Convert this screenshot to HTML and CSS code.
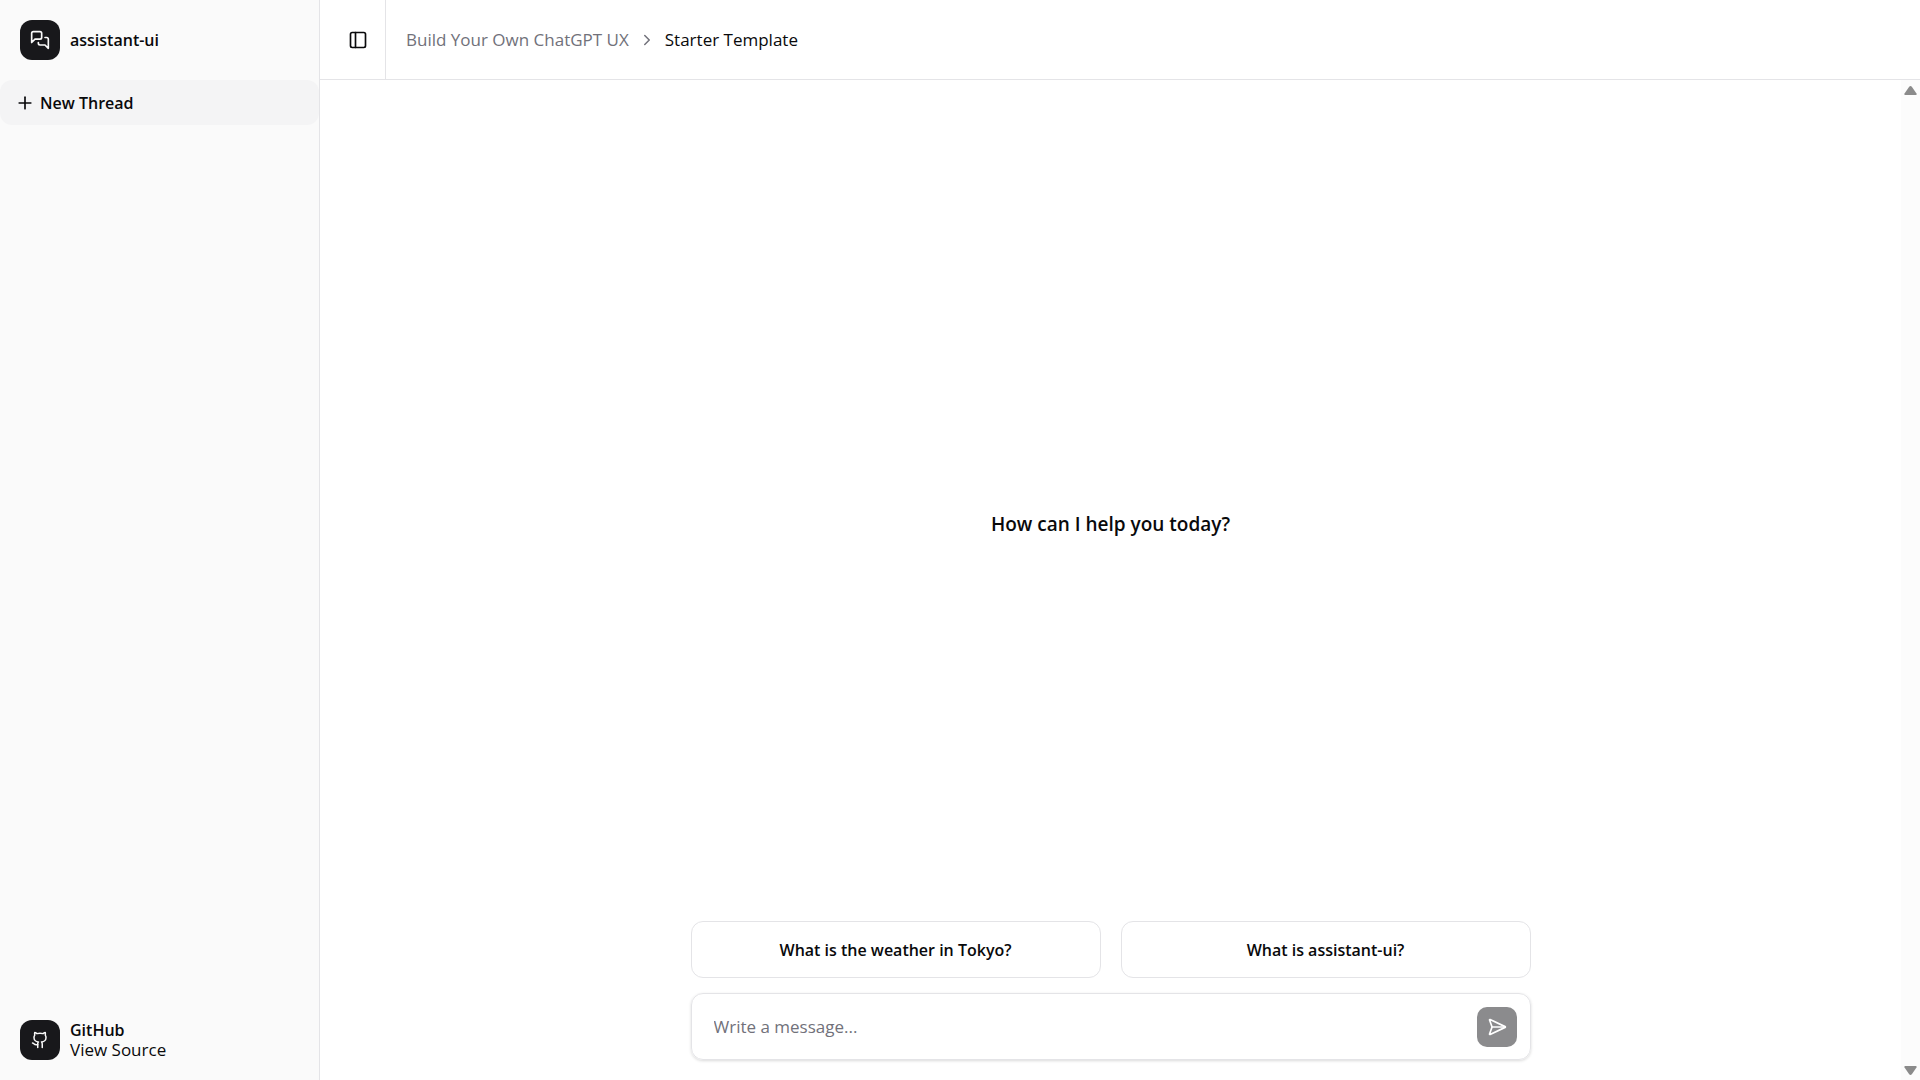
FILE: index.html
```html
<!DOCTYPE html>
<html lang="en">
<head>
<meta charset="utf-8">
<title>assistant-ui</title>
<link rel="stylesheet" href="styles.css">
</head>
<body>
<div class="app">
  <aside class="sidebar">
    <a class="brand" href="#">
      <span class="brand-icon"><svg class="icon" viewBox="0 0 24 24"><path d="M14 9a2 2 0 0 1-2 2H6l-4 4V4a2 2 0 0 1 2-2h8a2 2 0 0 1 2 2z"/><path d="M18 9h2a2 2 0 0 1 2 2v11l-4-4h-6a2 2 0 0 1-2-2v-1"/></svg></span>
      <span class="brand-text"><span class="brand-name">assistant-ui</span></span>
    </a>
    <button class="new-thread" type="button"><svg class="icon" viewBox="0 0 24 24"><path d="M5 12h14"/><path d="M12 5v14"/></svg>New Thread</button>
    <a class="brand brand-footer" href="#">
      <span class="brand-icon"><svg class="icon icon-small" viewBox="0 0 24 24"><path d="M15 22v-4a4.800 4.800 0 0 0-1-3.500c3 0 6-2 6-5.500.08-1.250-.27-2.480-1-3.500.28-1.150.28-2.350 0-3.500 0 0-1 0-3 1.500-2.640-.5-5.360-.5-8 0C6 2 5 2 5 2c-.3 1.150-.3 2.350 0 3.500A5.403 5.403 0 0 0 4 9c0 3.500 3 5.500 6 5.500-.39.490-.68 1.050-.85 1.650-.17.600-.22 1.230-.15 1.850v4"/><path d="M9 18c-4.510 2-5-2-7-2"/></svg></span>
      <span class="brand-text"><span class="brand-name">GitHub</span><span>View Source</span></span>
    </a>
  </aside>
  <main class="main">
    <header class="header">
      <div class="header-toggle">
        <button class="toggle" type="button" aria-label="Toggle sidebar"><svg class="icon" viewBox="0 0 24 24"><rect width="18" height="18" x="3" y="3" rx="2"/><path d="M9 3v18"/></svg></button>
      </div>
      <nav class="breadcrumb" aria-label="Breadcrumb">
        <a href="#">Build Your Own ChatGPT UX</a>
        <svg class="icon icon-small" viewBox="0 0 24 24"><path d="m9 18 6-6-6-6"/></svg>
        <span class="current">Starter Template</span>
      </nav>
    </header>
    <div class="body">
      <section class="thread">
        <div class="welcome"><p>How can I help you today?</p></div>
        <div class="suggestions">
          <button type="button">What is the weather in Tokyo?</button>
          <button type="button">What is assistant-ui?</button>
        </div>
        <form class="composer">
          <input type="text" placeholder="Write a message..." aria-label="Message">
          <button class="send" type="button" aria-label="Send"><svg class="icon" viewBox="0 0 24 24"><path d="M3.714 3.048a.498.498 0 0 0-.683.627l2.843 7.627a2 2 0 0 1 0 1.396l-2.842 7.627a.498.498 0 0 0 .682.627l18-8.500a.5.5 0 0 0 0-.904z"/><path d="M6 12h16"/></svg></button>
        </form>
      </section>
      <div class="scrollbar" aria-hidden="true">
        <svg viewBox="0 0 13 10"><path d="M6.500 0Q7.200 0 8 1L12.500 7.500Q13 9 12 9H1Q0 9 .5 7.500L5 1Q5.800 0 6.500 0z"/></svg>
        <svg viewBox="0 0 13 10"><path d="M6.500 10Q5.800 10 5 9L.5 2.500Q0 1 1 1H12Q13 1 12.500 2.500L8 9Q7.200 10 6.500 10z"/></svg>
      </div>
    </div>
  </main>
</div>
</body>
</html>
```
FILE: styles.css
```css
* { box-sizing: border-box; }
body {
  margin: 0;
  background: #fff;
  color: #09090b;
  font-family: "Open Sans", "Noto Sans", sans-serif;
  font-size: 17px;
  line-height: 24px;
}
button, input { font: inherit; color: inherit; }
button { border: 0; background: none; padding: 0; cursor: pointer; }
a { color: inherit; text-decoration: none; }
.icon {
  width: 20px;
  height: 20px;
  flex: none;
  fill: none;
  stroke: currentColor;
  stroke-width: 2;
  stroke-linecap: round;
  stroke-linejoin: round;
}
.icon-small { width: 18px; height: 18px; }
.app { display: flex; height: 100vh; }

.sidebar {
  display: flex;
  flex-direction: column;
  flex: 0 0 320px;
  background: #fafafa;
  border-right: 1px solid #e4e4e7;
}
.brand { display: flex; align-items: center; gap: 10px; padding: 20px; }
.brand-footer { margin-top: auto; }
.brand-icon {
  display: flex;
  align-items: center;
  justify-content: center;
  width: 40px;
  height: 40px;
  border-radius: 12px;
  background: #18181b;
  color: #fafafa;
}
.brand-text { display: flex; flex-direction: column; line-height: 20px; }
.brand-name { font-size: 16px; font-weight: 600; }
.new-thread {
  display: flex;
  align-items: center;
  gap: 5px;
  height: 45px;
  padding: 0 15px;
  border-radius: 12px;
  background: #f4f4f5;
  font-size: 16px;
  font-weight: 600;
}

.main { display: flex; flex-direction: column; flex: 1; min-width: 0; }
.header { display: flex; height: 80px; border-bottom: 1px solid #e4e4e7; }
.header-toggle {
  display: flex;
  align-items: center;
  padding: 0 9px 0 20px;
  border-right: 1px solid #e4e4e7;
}
.toggle { display: flex; align-items: center; justify-content: center; width: 36px; height: 36px; }
.breadcrumb { display: flex; align-items: center; gap: 9px; padding-left: 20px; color: #71717a; }
.current { color: #09090b; }

.body { display: flex; flex: 1; min-height: 0; }
.thread {
  display: flex;
  flex-direction: column;
  align-items: center;
  flex: 1;
  padding: 0 20px 20px;
}
.welcome { display: flex; align-items: center; flex: 1; }
.welcome p { margin: 46px 0 0; font-size: 19px; font-weight: 600; }
.suggestions, .composer { width: 100%; max-width: 840px; }
.suggestions { display: grid; grid-template-columns: 1fr 1fr; gap: 20px; margin-bottom: 15px; }
.suggestions button {
  height: 57px;
  border: 1px solid #e4e4e7;
  border-radius: 12px;
  font-size: 16px;
  font-weight: 600;
}
.composer {
  display: flex;
  align-items: center;
  height: 67px;
  padding: 0 13px 0 22px;
  border: 1px solid #e4e4e7;
  border-radius: 12px;
  box-shadow: 0 1px 3px rgba(0, 0, 0, 0.15);
}
.composer input { flex: 1; min-width: 0; border: 0; padding: 0; outline: 0; background: none; }
.composer input::placeholder { color: #71717a; opacity: 1; }
.send {
  display: flex;
  align-items: center;
  justify-content: center;
  width: 40px;
  height: 40px;
  border-radius: 10px;
  background: #8b8b8d;
  color: #fff;
}
.scrollbar {
  display: flex;
  flex-direction: column;
  align-items: center;
  justify-content: space-between;
  width: 19px;
  padding: 6px 0 5px;
  background: #fcfcfc;
}
.scrollbar svg { width: 13px; height: 10px; fill: #8b8b8b; }
```
